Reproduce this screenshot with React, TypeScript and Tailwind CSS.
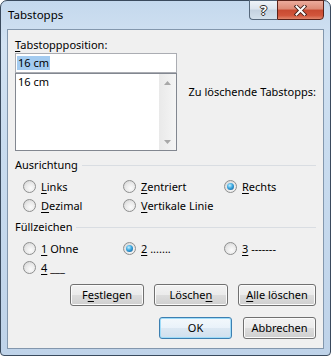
import React from "react";

const U = ({ children }: { children: React.ReactNode }) => (
  <span className="underline underline-offset-[2px] decoration-[1px]">{children}</span>
);

function Radio({ checked }: { checked?: boolean }) {
  return (
    <span className="relative w-[13px] h-[13px] shrink-0 rounded-full border border-[#8e8f8f] bg-[radial-gradient(circle_at_60%_65%,#fbfbfb_0%,#e9e9e9_50%,#cdcdcd_100%)]">
      {checked && (
        <span className="absolute left-[2px] top-[2px] w-[7px] h-[7px] rounded-full bg-[radial-gradient(circle_at_40%_35%,#c4f0ff_0%,#3aa6df_45%,#0d4d86_100%)]" />
      )}
    </span>
  );
}

function Opt({ checked, children }: { checked?: boolean; children: React.ReactNode }) {
  return (
    <div className="flex items-center gap-[5px] h-[19px] whitespace-nowrap">
      <Radio checked={checked} />
      <span className="leading-[16px]">{children}</span>
    </div>
  );
}

function Btn({ children, cls, def }: { children: React.ReactNode; cls: string; def?: boolean }) {
  return (
    <div
      className={
        "h-[22px] rounded-[3px] border flex items-center justify-center leading-[16px] " +
        cls +
        (def
          ? " border-[#3c7fb1] shadow-[inset_0_0_0_1px_#9fdcf9] bg-[linear-gradient(180deg,#f3f8fc_0%,#e9f2fa_50%,#dce8f3_50%,#d0e0ee_100%)]"
          : " border-[#707070] shadow-[inset_0_0_0_1px_#fbfbfb] bg-[linear-gradient(180deg,#f2f2f2_0%,#ebebeb_50%,#dddddd_50%,#cfcfcf_100%)]")
      }
    >
      {children}
    </div>
  );
}

function GroupHead({ children }: { children: React.ReactNode }) {
  return (
    <div className="h-[16px] flex items-center">
      <span className="leading-[16px] whitespace-nowrap">{children}</span>
      <div className="flex-1 ml-[4px] h-px bg-[#d9dde2]" />
    </div>
  );
}

export default function App() {
  return (
    <div className="w-[331px] h-[356px] bg-white font-['Noto_Sans',sans-serif] text-[11px] text-black">
      <div className="relative w-[331px] h-[356px] flex flex-col rounded-t-[7px] rounded-b-[4px] border border-[#3a4a5d] bg-[linear-gradient(180deg,#c4d8ed_0%,#d2e2f2_12%,#c9dcef_40%,#bfd3e9_100%)]">
        {/* title bar */}
        <div className="h-[28px] shrink-0 flex items-center pl-[7px] text-[11.5px] text-black">Tabstopps</div>

        <div className="absolute top-[-1px] left-[248px] flex">
          <div className="w-[28px] h-[20px] rounded-bl-[4px] border border-[#56687c] border-r-0 bg-[linear-gradient(180deg,#eef3f8_0%,#dbe4ee_45%,#c4d2e0_50%,#d3e0ec_100%)] flex items-center justify-center">
            <span className="text-white font-bold text-[13px] leading-[13px] [text-shadow:1px_0_#2b2b2b,-1px_0_#2b2b2b,0_1px_#2b2b2b,0_-1px_#2b2b2b]">?</span>
          </div>
          <div className="w-[47px] h-[20px] rounded-br-[4px] border border-[#5a2219] bg-[linear-gradient(180deg,#ecab9c_0%,#dd8a75_45%,#c84a31_50%,#d1553b_80%,#e1866c_100%)] flex items-center justify-center">
            <svg width="13" height="11" viewBox="0 0 13 11">
              <path d="M2.5 1.5 L10.5 9.5 M10.5 1.5 L2.5 9.5" stroke="#43201a" strokeWidth="3.8" strokeLinecap="square" />
              <path d="M2.5 1.5 L10.5 9.5 M10.5 1.5 L2.5 9.5" stroke="#ffffff" strokeWidth="2" strokeLinecap="square" />
            </svg>
          </div>
        </div>

        {/* client */}
        <div className="flex-1 mx-[6px] mb-[6px] border border-[#8397ad] bg-[#f0f0f0] px-[7px] flex flex-col">
          <div className="flex pt-[7px]">
            <div className="w-[163px] flex flex-col">
              <div className="h-[16px] leading-[16px]">
                <U>T</U>abstoppposition:
              </div>
              <div className="h-[20px] border border-[#abadb3] bg-white flex items-center pl-[1px]">
                <span className="bg-[#a3cbf0] px-[1px] leading-[14px]">16 cm</span>
              </div>
              <div className="h-[78px] border border-[#828790] bg-white flex">
                <div className="flex-1 pl-[2px] leading-[16px]">16 cm</div>
                <div className="w-[17px] flex flex-col justify-between bg-[linear-gradient(90deg,#e9e9e9,#f5f5f5)]">
                  <div className="h-[17px] flex items-center justify-center">
                    <svg width="7" height="4" viewBox="0 0 7 4">
                      <path d="M0 4 L3.5 0 L7 4 Z" fill="#a8a8a8" />
                    </svg>
                  </div>
                  <div className="h-[17px] flex items-center justify-center">
                    <svg width="7" height="4" viewBox="0 0 7 4">
                      <path d="M0 0 L3.5 4 L7 0 Z" fill="#a8a8a8" />
                    </svg>
                  </div>
                </div>
              </div>
            </div>
            <div className="ml-[12px] mt-[47px] leading-[16px] whitespace-nowrap">Zu löschende Tabstopps:</div>
          </div>

          <div className="mt-[6px]">
            <GroupHead>Ausrichtung</GroupHead>
          </div>
          <div className="mt-[4px] pl-[8px] grid grid-cols-[100px_101px_1fr]">
            <Opt>
              <U>L</U>inks
            </Opt>
            <Opt>
              <U>Z</U>entriert
            </Opt>
            <Opt checked>
              <U>R</U>echts
            </Opt>
            <Opt>
              <U>D</U>ezimal
            </Opt>
            <Opt>
              <U>V</U>ertikale Linie
            </Opt>
          </div>

          <div className="mt-[4px]">
            <GroupHead>Füllzeichen</GroupHead>
          </div>
          <div className="mt-[4px] pl-[8px] grid grid-cols-[100px_101px_1fr]">
            <Opt>
              <U>1</U> Ohne
            </Opt>
            <Opt checked>
              <U>2</U> .......
            </Opt>
            <Opt>
              <U>3</U> -------
            </Opt>
            <Opt>
              <U>4</U> ___
            </Opt>
          </div>

          <div className="mt-[7px] flex justify-end gap-[10px]">
            <Btn cls="w-[74px]">
              F<U>e</U>stlegen
            </Btn>
            <Btn cls="w-[74px]">
              Lösche<U>n</U>
            </Btn>
            <Btn cls="w-[78px]">
              <U>A</U>lle löschen
            </Btn>
          </div>
          <div className="mt-[11px] flex justify-end gap-[11px]">
            <Btn cls="w-[73px]" def>
              OK
            </Btn>
            <Btn cls="w-[73px]">Abbrechen</Btn>
          </div>
        </div>
      </div>
    </div>
  );
}
